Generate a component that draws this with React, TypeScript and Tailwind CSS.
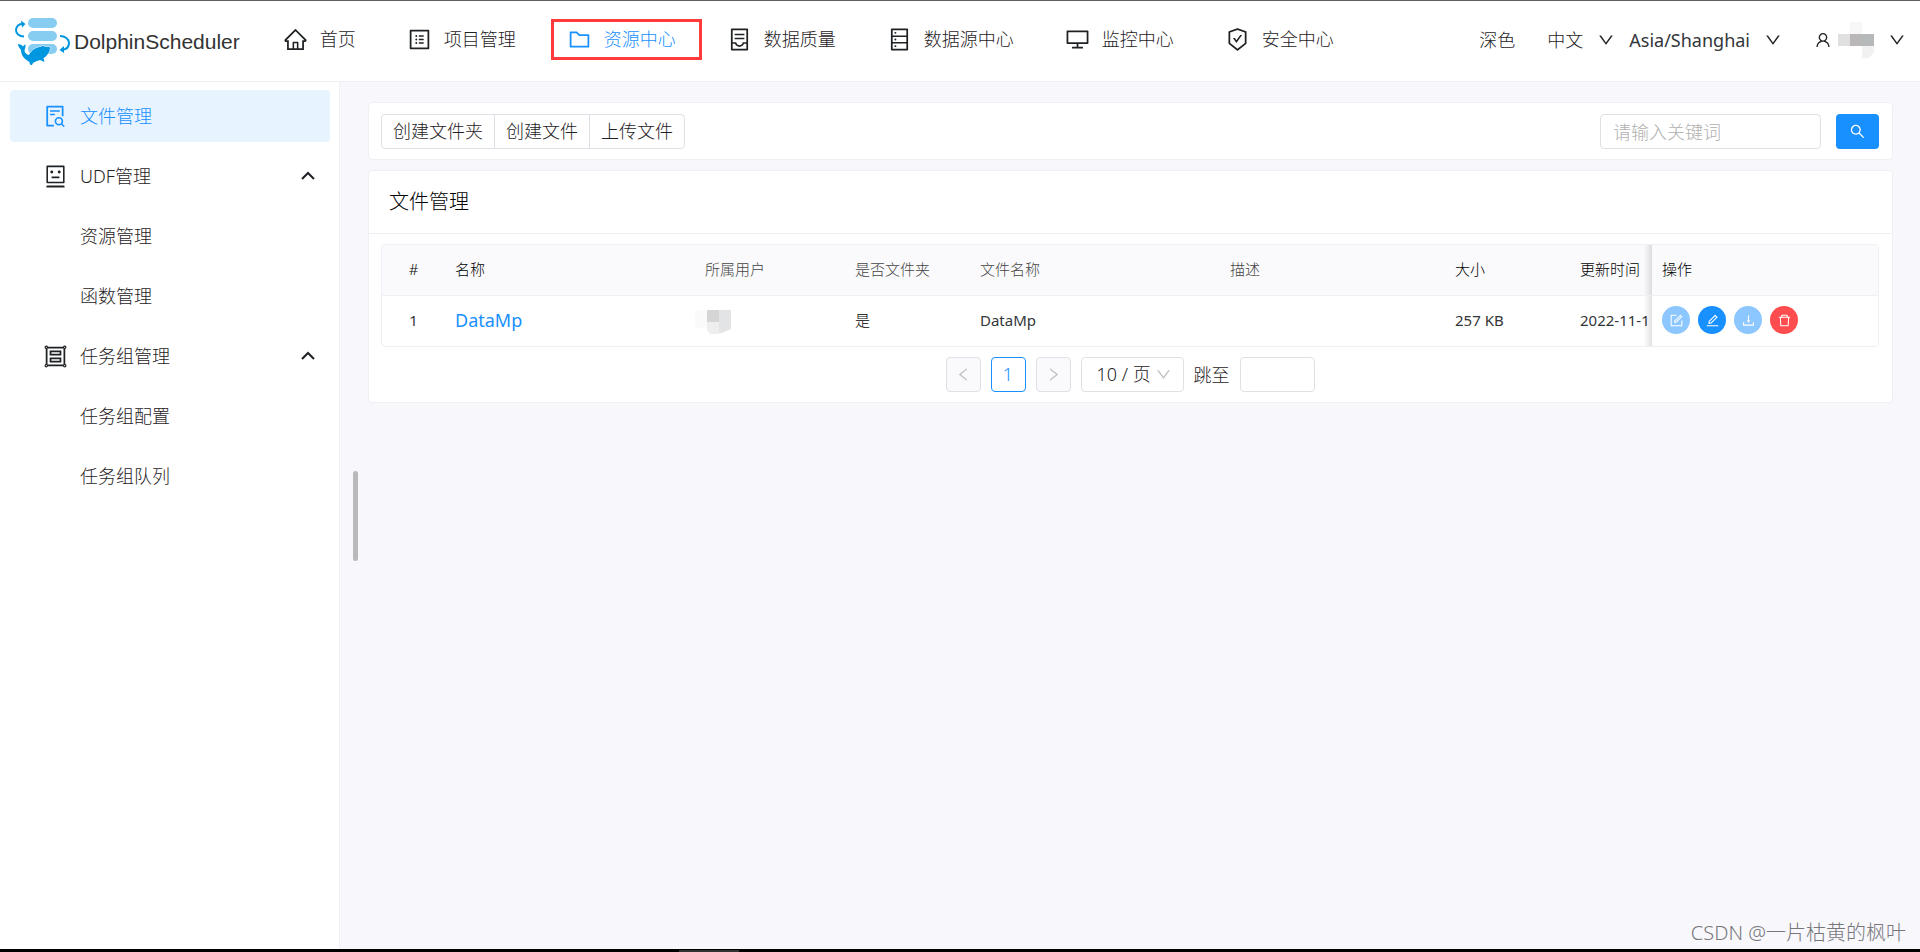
import type { ReactNode } from 'react'
import {
  AiOutlineContainer,
  AiOutlineDatabase,
  AiOutlineDelete,
  AiOutlineDesktop,
  AiOutlineDown,
  AiOutlineDownload,
  AiOutlineEdit,
  AiOutlineFileSearch,
  AiOutlineFolder,
  AiOutlineForm,
  AiOutlineGroup,
  AiOutlineHome,
  AiOutlineLeft,
  AiOutlineProfile,
  AiOutlineRight,
  AiOutlineRobot,
  AiOutlineSafetyCertificate,
  AiOutlineSearch,
  AiOutlineUser,
} from 'react-icons/ai'

const menus = [
  { label: '首页', icon: AiOutlineHome },
  { label: '项目管理', icon: AiOutlineProfile },
  { label: '资源中心', icon: AiOutlineFolder, active: true },
  { label: '数据质量', icon: AiOutlineContainer },
  { label: '数据源中心', icon: AiOutlineDatabase },
  { label: '监控中心', icon: AiOutlineDesktop },
  { label: '安全中心', icon: AiOutlineSafetyCertificate },
]

const columns = [
  { title: '#', cls: 'w-[63px] text-center' },
  { title: '名称', cls: 'w-[250px]' },
  { title: '所属用户', cls: 'w-[150px] text-[#444]' },
  { title: '是否文件夹', cls: 'w-[125px] text-[#444]' },
  { title: '文件名称', cls: 'w-[250px] text-[#444]' },
  { title: '描述', cls: 'w-[225px] text-[#444]' },
  { title: '大小', cls: 'w-[125px] text-black' },
  { title: '更新时间', cls: 'w-[226px] text-black' },
]

const actions = [
  { label: '编辑', icon: AiOutlineForm, cls: 'bg-[#8cc7ff]', disabled: true },
  { label: '重命名', icon: AiOutlineEdit, cls: 'bg-[#1890ff]' },
  { label: '下载', icon: AiOutlineDownload, cls: 'bg-[#8cc7ff]', disabled: true },
  { label: '删除', icon: AiOutlineDelete, cls: 'bg-[#ff4d4f]' },
]

function Logo() {
  return (
    <a href="#" className="flex items-center gap-1">
      <svg width="58" height="52" viewBox="0 0 58 52" aria-hidden="true">
        <g fill="#86cdf1">
          <rect x="16" y="3" width="29" height="10" rx="5" />
          <rect x="16" y="16" width="29" height="10" rx="5" />
          <rect x="16" y="29" width="29" height="10" rx="5" />
        </g>
        <g fill="none" stroke="#0097e0" strokeWidth="2">
          <path d="M12 21.500C7 21.500 4 18.500 4 15C4 11.500 7 8.800 11 8.800" />
          <path d="M48 21C53 21 57 24 57 28C57 32 54 34.500 50 35" />
        </g>
        <path fill="#0097e0" d="M9 5.500L13.500 9L10 12.500Z" />
        <path fill="#0097e0" d="M52 31L47.500 35L52 38Z" />
        <path
          fill="#0097e0"
          stroke="#fff"
          strokeWidth="1"
          paintOrder="stroke"
          d="M6 29C8 29 10 30 11 31.500C12 30 13 29.500 13.500 29.500C14 32 12.500 34 12.500 36C13 38 14.500 39.500 17 40C19 36 23 32.500 28 32C30 30.500 33 30.500 32.500 32C35 31.500 37 32 39 33C37 34 38 35 37.500 36C36 39 34 42 31.500 43L32.500 47L28 45C25 46 21 47 20 50C18.500 50.500 17.500 49 17.500 47C12 44 9 40 9 35C8 33 6 32 6 29Z"
        />
      </svg>
      <span className="pt-[2px] font-['Liberation_Sans',sans-serif] text-[21px] font-normal text-[#333]">DolphinScheduler</span>
    </a>
  )
}

function ChevronUp() {
  return (
    <svg width="16" height="16" viewBox="0 0 16 16" fill="none" stroke="currentColor" strokeWidth="2" aria-hidden="true">
      <path d="M2 11L8 5L14 11" />
    </svg>
  )
}

function TopDropdown({ children }: { children: ReactNode }) {
  return (
    <button type="button" className="flex items-center gap-[14px]">
      {children}
      <AiOutlineDown size={18} />
    </button>
  )
}

function SideGroup({ icon, label, items }: { icon: ReactNode; label: string; items: string[] }) {
  return (
    <div className="flex flex-col gap-2">
      <button type="button" className="flex h-[52px] items-center gap-3 pr-[14px] pl-[33px]">
        {icon}
        <span className="flex-1 text-left">{label}</span>
        <ChevronUp />
      </button>
      {items.map((item) => (
        <a key={item} href="#" className="flex h-[52px] items-center pl-[70px]">
          {item}
        </a>
      ))}
    </div>
  )
}

export default function App() {
  return (
    <div className="relative flex min-h-screen flex-col overflow-hidden border-t border-[#5f5f66] bg-white font-['Noto_Sans','Noto_Sans_CJK_SC',sans-serif] text-[18px] leading-6 font-light text-[#1f2225]">
      <header className="flex h-[81px] items-center border-b border-[#efeff5] pr-[14px] pl-3">
        <Logo />
        <nav className="ml-[43px] flex flex-1 items-center gap-[51px] pb-1 whitespace-nowrap">
          {menus.map(({ label, icon: Icon, active }) => (
            <a key={label} href="#" className={`relative flex items-center gap-3 ${active ? 'text-[#1890ff]' : ''}`}>
              <Icon size={25} />
              {label}
              {active && <span className="absolute -inset-y-2 -right-[26px] -left-4 border-3 border-[#ff3b3b]" />}
            </a>
          ))}
        </nav>
        <div className="flex items-center pb-[2px] whitespace-nowrap">
          <button type="button" className="mr-8">深色</button>
          <TopDropdown>中文</TopDropdown>
          <span className="w-[14px]" />
          <TopDropdown><span className="font-normal text-[#333639]">Asia/Shanghai</span></TopDropdown>
          <span className="w-8" />
          <TopDropdown>
            <AiOutlineUser size={18} />
            <svg width="36" height="36" viewBox="0 0 36 36" className="-ml-2" aria-hidden="true">
              <rect x="12" width="12" height="12" fill="#f7f7f7" />
              <rect y="12" width="12" height="12" fill="#e1e0e1" />
              <rect x="12" y="12" width="12" height="12" fill="#bab7b8" />
              <rect x="24" y="12" width="12" height="12" fill="#b6b9b9" />
              <path d="M24 24H36V30L31 36H24Z" fill="#f1f1f1" />
            </svg>
          </TopDropdown>
        </div>
      </header>

      <div className="flex flex-1">
        <aside className="flex w-[340px] shrink-0 flex-col gap-2 border-r border-[#efeff5] pt-2 pr-[9px] pl-[10px]">
          <a href="#" className="flex h-[52px] items-center gap-3 rounded-sm bg-[#e7f3ff] pl-[33px] text-[#1890ff]">
            <AiOutlineFileSearch size={25} />
            文件管理
          </a>
          <SideGroup icon={<AiOutlineRobot size={25} />} label="UDF管理" items={['资源管理', '函数管理']} />
          <SideGroup icon={<AiOutlineGroup size={25} />} label="任务组管理" items={['任务组配置', '任务组队列']} />
        </aside>

        <main className="relative flex min-w-0 flex-1 flex-col gap-[10px] bg-[#f7f7fc] pt-5 pr-[27px] pl-7">
          {/* scrollbar thumb */}
          <span className="absolute top-[389px] left-[13px] h-[90px] w-[5px] rounded-full bg-[#b9b9bc]" />

          <section className="flex items-center justify-between rounded-sm border border-[#efeff5] bg-white pt-[11px] pr-[13px] pb-[10px] pl-3">
            <div className="flex h-[35px] divide-x divide-[#e0e0e6] rounded-sm border border-[#e0e0e6]">
              <button type="button" className="px-[11px] pb-[2px]">创建文件夹</button>
              <button type="button" className="px-[11px] pb-[2px]">创建文件</button>
              <button type="button" className="px-[11px] pb-[2px]">上传文件</button>
            </div>
            <div className="flex gap-[15px]">
              <input
                type="text"
                aria-label="请输入关键词"
                placeholder="请输入关键词"
                className="h-[35px] w-[221px] rounded-sm border border-[#e0e0e6] px-3 placeholder:text-[#b0b0b0]"
              />
              <button type="button" aria-label="搜索" className="flex h-[35px] w-[43px] items-center justify-center rounded-sm bg-[#1890ff] text-white">
                <AiOutlineSearch size={17} />
              </button>
            </div>
          </section>

          <section className="rounded-sm border border-[#efeff5] bg-white">
            <h2 className="flex h-[63px] items-center border-b border-[#efeff5] px-5 text-[20px] text-black">文件管理</h2>
            <div className="py-[10px] pr-[13px] pl-3">
              <div className="overflow-hidden rounded-sm border border-[#efeff5]">
                <table className="w-full min-w-[1640px] table-fixed border-separate border-spacing-0 text-[15px]">
                  <thead>
                    <tr className="h-[51px] text-left whitespace-nowrap text-black">
                      {columns.map((col) => (
                        <th key={col.title} className={`border-b border-[#efeff5] bg-[#fafafc] px-[10px] pt-0 pb-[2px] font-light ${col.cls}`}>
                          {col.title}
                        </th>
                      ))}
                      <th className="sticky right-0 w-[226px] border-b border-[#efeff5] bg-[#fafafc] px-[10px] pt-0 pb-[2px] font-light">
                        <span className="absolute inset-y-0 -left-2 w-2 bg-linear-to-l from-black/12 to-transparent" />
                        操作
                      </th>
                    </tr>
                  </thead>
                  <tbody>
                    <tr className="h-[50px] font-normal whitespace-nowrap text-[#333639]">
                      <td className="px-[10px] pt-0 pb-[2px] text-center">1</td>
                      <td className="px-[10px] pt-0 pb-[2px]">
                        <a href="#" className="text-[18px] text-[#1890ff]">DataMp</a>
                      </td>
                      <td className="pt-[2px] pl-0">
                        <svg width="36" height="24" viewBox="0 0 36 24" aria-hidden="true">
                          <path d="M0 0H12V18H4L0 16Z" fill="#fafafa" />
                          <rect x="12" width="12" height="12" fill="#d6d5d5" />
                          <path d="M12 12H24V24H15L12 20Z" fill="#eeeeef" />
                          <path d="M24 0H36V19L27 23H24Z" fill="#e2e4e6" />
                        </svg>
                      </td>
                      <td className="px-[10px] pt-0 pb-[2px] font-light text-black">是</td>
                      <td className="px-[10px] pt-0 pb-[2px]">DataMp</td>
                      <td className="px-[10px] pt-0 pb-[2px]" />
                      <td className="px-[10px] pt-0 pb-[2px]">257 KB</td>
                      <td className="px-[10px] pt-0 pb-[2px]">2022-11-1</td>
                      <td className="sticky right-0 bg-white px-[10px] pt-0 pb-[2px]">
                        <span className="absolute inset-y-0 -left-2 w-2 bg-linear-to-l from-black/12 to-transparent" />
                        <div className="flex gap-2">
                          {actions.map(({ label, icon: Icon, cls, disabled }) => (
                            <button
                              key={label}
                              type="button"
                              aria-label={label}
                              disabled={disabled}
                              className={`flex size-7 items-center justify-center rounded-full text-white ${cls}`}
                            >
                              <Icon size={15} />
                            </button>
                          ))}
                        </div>
                      </td>
                    </tr>
                  </tbody>
                </table>
              </div>

              <div className="mt-[10px] flex items-center justify-center gap-[10px]">
                <button type="button" aria-label="上一页" disabled className="flex size-[35px] items-center justify-center rounded-sm border border-[#e0e0e6] bg-[#fafafc] text-[#c2c2c2]">
                  <AiOutlineLeft size={17} />
                </button>
                <button type="button" className="size-[35px] rounded-sm border border-[#1890ff] pb-[2px] text-[#1890ff]">1</button>
                <button type="button" aria-label="下一页" disabled className="flex size-[35px] items-center justify-center rounded-sm border border-[#e0e0e6] bg-[#fafafc] text-[#c2c2c2]">
                  <AiOutlineRight size={17} />
                </button>
                <div className="relative">
                  <select aria-label="每页条数" className="h-[35px] w-[103px] appearance-none rounded-sm border border-[#e0e0e6] bg-white pb-[2px] pl-[15px]">
                    <option>10 / 页</option>
                  </select>
                  <AiOutlineDown size={17} className="pointer-events-none absolute top-[9px] right-3 text-[#c2c2c2]" />
                </div>
                <label htmlFor="jump">跳至</label>
                <input id="jump" type="text" className="h-[35px] w-[75px] rounded-sm border border-[#e0e0e6] px-3" />
              </div>
            </div>
          </section>
        </main>
      </div>

      <div className="flex h-[3px] items-end bg-black">
        <span className="ml-[679px] h-[2px] w-[60px] bg-[#333]" />
      </div>
      <span className="absolute right-[14px] bottom-[7px] text-[20px] text-[#77777b]">CSDN @一片枯黄的枫叶</span>
    </div>
  )
}
